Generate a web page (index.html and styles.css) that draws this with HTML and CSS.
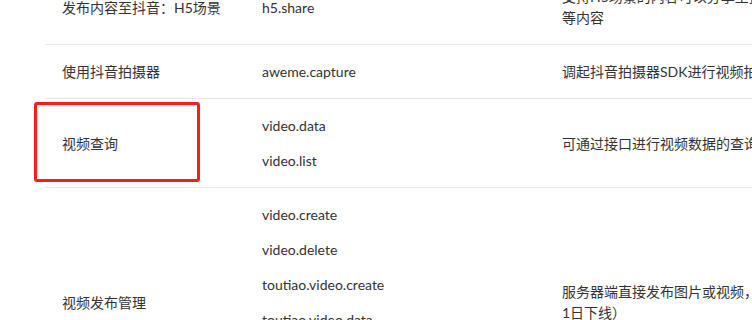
FILE: index.html
```html
<!DOCTYPE html>
<html lang="zh">
<head>
<meta charset="utf-8">
<link rel="stylesheet" href="styles.css">
</head>
<body>
<div class="page">
  <table class="api">
    <colgroup>
      <col class="c1"><col class="c2"><col class="c3">
    </colgroup>
    <tbody>
      <tr>
        <td>发布内容至抖音：H5场景</td>
        <td><p>h5.share</p></td>
        <td>支持H5场景的内容可以分享至抖音，包括图片、视频<br>等内容</td>
      </tr>
      <tr>
        <td>使用抖音拍摄器</td>
        <td><p>aweme.capture</p></td>
        <td>调起抖音拍摄器SDK进行视频拍摄</td>
      </tr>
      <tr>
        <td class="mark-cell"><span class="mark"></span>视频查询</td>
        <td><p>video.data</p><p>video.list</p></td>
        <td>可通过接口进行视频数据的查询</td>
      </tr>
      <tr>
        <td>视频发布管理</td>
        <td><p>video.create</p><p>video.delete</p><p>toutiao.video.create</p><p>toutiao.video.data</p><p>xigua.video.create</p><p>xigua.video.data</p></td>
        <td>服务器端直接发布图片或视频，部分能力将于2022年<br>1日下线）</td>
      </tr>
    </tbody>
  </table>
</div>
</body>
</html>
```
FILE: styles.css
```css
html, body {
  margin: 0;
  padding: 0;
  background: #fff;
  overflow: hidden;
}
.page {
  width: 752px;
  height: 320px;
  overflow: hidden;
}
.api {
  margin-top: -30px;
  margin-left: 46px;
  width: 1000px;
  border-collapse: collapse;
  table-layout: fixed;
  font-family: Lato, "Noto Sans CJK SC", sans-serif;
  font-size: 14px;
  line-height: 21px;
  color: #333;
}
.c1 { width: 200px; }
.c2 { width: 300px; }
.c3 { width: 500px; }
.api td {
  padding: 16px;
  border-bottom: 1px solid #e8e8e8;
  vertical-align: middle;
  white-space: nowrap;
}
.api td p {
  margin: 0;
}
.api td p + p {
  margin-top: 14px;
}
.mark-cell {
  position: relative;
}
.mark {
  position: absolute;
  left: -12px;
  top: 3px;
  width: 160px;
  height: 74px;
  border: 3px solid #fa1e1a;
  border-radius: 3px;
}
```
